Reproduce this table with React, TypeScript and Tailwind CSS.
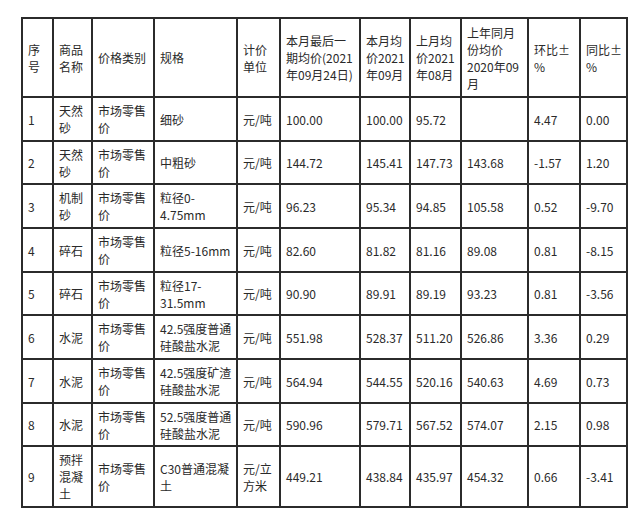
import React from 'react';

type Row = {
  no: string;
  name: React.ReactNode;
  spec: React.ReactNode;
  unit: React.ReactNode;
  last: string;
  avg: string;
  prev: string;
  yearAgo: string;
  mom: string;
  yoy: string;
  h: string;
};

const priceType = (
  <>
    市场零售
    <br />
    价
  </>
);

const rows: Row[] = [
  { no: '1', name: <>天然<br />砂</>, spec: '细砂', unit: '元/吨', last: '100.00', avg: '100.00', prev: '95.72', yearAgo: '', mom: '4.47', yoy: '0.00', h: 'h-[44px]' },
  { no: '2', name: <>天然<br />砂</>, spec: '中粗砂', unit: '元/吨', last: '144.72', avg: '145.41', prev: '147.73', yearAgo: '143.68', mom: '-1.57', yoy: '1.20', h: 'h-[43px]' },
  { no: '3', name: <>机制<br />砂</>, spec: <>粒径0-<br />4.75mm</>, unit: '元/吨', last: '96.23', avg: '95.34', prev: '94.85', yearAgo: '105.58', mom: '0.52', yoy: '-9.70', h: 'h-[44px]' },
  { no: '4', name: '碎石', spec: '粒径5-16mm', unit: '元/吨', last: '82.60', avg: '81.82', prev: '81.16', yearAgo: '89.08', mom: '0.81', yoy: '-8.15', h: 'h-[44px]' },
  { no: '5', name: '碎石', spec: <>粒径17-<br />31.5mm</>, unit: '元/吨', last: '90.90', avg: '89.91', prev: '89.19', yearAgo: '93.23', mom: '0.81', yoy: '-3.56', h: 'h-[43px]' },
  { no: '6', name: '水泥', spec: <>42.5强度普通<br />硅酸盐水泥</>, unit: '元/吨', last: '551.98', avg: '528.37', prev: '511.20', yearAgo: '526.86', mom: '3.36', yoy: '0.29', h: 'h-[44px]' },
  { no: '7', name: '水泥', spec: <>42.5强度矿渣<br />硅酸盐水泥</>, unit: '元/吨', last: '564.94', avg: '544.55', prev: '520.16', yearAgo: '540.63', mom: '4.69', yoy: '0.73', h: 'h-[44px]' },
  { no: '8', name: '水泥', spec: <>52.5强度普通<br />硅酸盐水泥</>, unit: '元/吨', last: '590.96', avg: '579.71', prev: '567.52', yearAgo: '574.07', mom: '2.15', yoy: '0.98', h: 'h-[43px]' },
  { no: '9', name: <>预拌<br />混凝<br />土</>, spec: <>C30普通混凝<br />土</>, unit: <>元/立<br />方米</>, last: '449.21', avg: '438.84', prev: '435.97', yearAgo: '454.32', mom: '0.66', yoy: '-3.41', h: 'h-[61px]' },
];

const cell = 'border-2 border-[#2b2b2b] px-[5px] py-0 align-middle text-left font-normal whitespace-nowrap overflow-hidden';

const App: React.FC = () => {
  return (
    <div className="min-h-screen bg-white pl-[21px] pt-[17px] text-[12px] leading-[17px] text-[#2a2a2a]" style={{ fontFamily: '"Noto Sans CJK SC", "Noto Sans", sans-serif' }}>
      <table className="w-[605px] table-fixed border-collapse">
        <colgroup>
          <col className="w-[31px]" />
          <col className="w-[39px]" />
          <col className="w-[62px]" />
          <col className="w-[83px]" />
          <col className="w-[43px]" />
          <col className="w-[80px]" />
          <col className="w-[50px]" />
          <col className="w-[51px]" />
          <col className="w-[67px]" />
          <col className="w-[52px]" />
          <col className="w-[47px]" />
        </colgroup>
        <thead>
          <tr className="h-[79px]">
            <th className={cell}>序<br />号</th>
            <th className={cell}>商品<br />名称</th>
            <th className={cell}>价格类别</th>
            <th className={cell}>规格</th>
            <th className={cell}>计价<br />单位</th>
            <th className={cell}>本月最后一<br />期均价(2021<br />年09月24日)</th>
            <th className={cell}>本月均<br />价2021<br />年09月</th>
            <th className={cell}>上月均<br />价2021<br />年08月</th>
            <th className={cell}>上年同月<br />份均价<br />2020年09<br />月</th>
            <th className={cell}>环比±<br />%</th>
            <th className={cell}>同比±<br />%</th>
          </tr>
        </thead>
        <tbody>
          {rows.map((r) => (
            <tr key={r.no} className={r.h}>
              <td className={cell}>{r.no}</td>
              <td className={cell}>{r.name}</td>
              <td className={cell}>{priceType}</td>
              <td className={cell}>{r.spec}</td>
              <td className={cell}>{r.unit}</td>
              <td className={cell}>{r.last}</td>
              <td className={cell}>{r.avg}</td>
              <td className={cell}>{r.prev}</td>
              <td className={cell}>{r.yearAgo}</td>
              <td className={cell}>{r.mom}</td>
              <td className={cell}>{r.yoy}</td>
            </tr>
          ))}
        </tbody>
      </table>
    </div>
  );
};

export default App;
